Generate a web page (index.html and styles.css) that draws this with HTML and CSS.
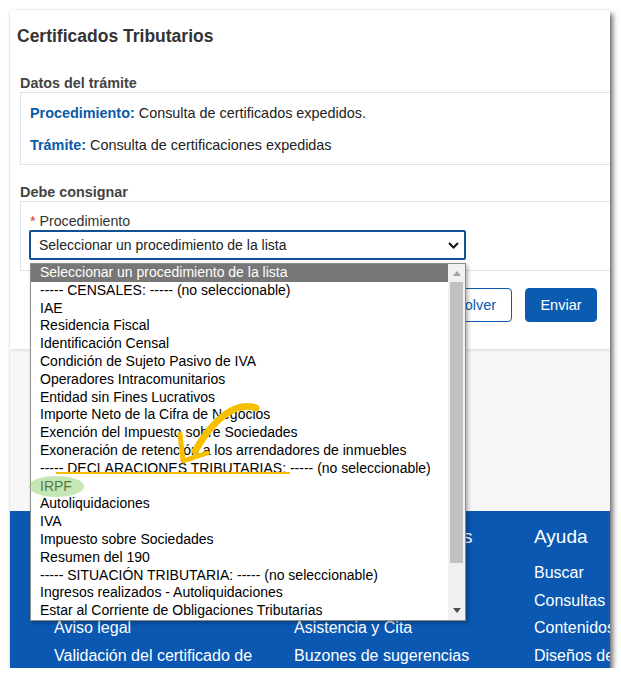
FILE: index.html
```html
<!DOCTYPE html>
<html lang="es">
<head>
<meta charset="utf-8">
<title>Certificados Tributarios</title>
<link rel="stylesheet" href="styles.css">
</head>
<body>
<div class="frame">
  <div class="page">
    <div class="card">
      <h1 class="title">Certificados Tributarios</h1>
      <div class="section">
        <h2 class="sec-title">Datos del trámite</h2>
        <div class="box box-data">
          <p class="line"><span class="lbl">Procedimiento:</span> Consulta de certificados expedidos.</p>
          <p class="line"><span class="lbl">Trámite:</span> Consulta de certificaciones expedidas</p>
        </div>
        <h2 class="sec-title sec-gap">Debe consignar</h2>
        <div class="box box-form">
          <div class="field-label"><span class="req">*</span> Procedimiento</div>
          <div class="select">
            <span>Seleccionar un procedimiento de la lista</span>
            <svg class="chev" width="11" height="7" viewBox="0 0 11 7"><path d="M1 1 L5.5 5.5 L10 1" fill="none" stroke="#111" stroke-width="2"/></svg>
          </div>
        </div>
        <div class="actions">
          <button class="btn btn-outline">Volver</button>
          <button class="btn btn-primary">Enviar</button>
        </div>
      </div>
    </div>
    <div class="gray"></div>
    <footer class="footer">
      <div class="fcol">
        <div class="fhead">Agencia Tributaria</div>
        <div class="flink">Accesibilidad</div>
        <div class="flink">Protección de datos</div>
        <div class="flink">Aviso legal</div>
        <div class="flink">Validación del certificado de</div>
      </div>
      <div class="fcol">
        <div class="fhead">Servicios y contactos</div>
        <div class="flink">Teléfonos</div>
        <div class="flink">Direcciones</div>
        <div class="flink">Asistencia y Cita</div>
        <div class="flink">Buzones de sugerencias</div>
      </div>
      <div class="fcol">
        <div class="fhead">Ayuda</div>
        <div class="flink">Buscar</div>
        <div class="flink">Consultas</div>
        <div class="flink">Contenidos</div>
        <div class="flink">Diseños de</div>
      </div>
    </footer>
  </div>

  <div class="dropdown">
    <ul class="options">
      <li class="opt sel">Seleccionar un procedimiento de la lista</li>
      <li class="opt">----- CENSALES: ----- (no seleccionable)</li>
      <li class="opt">IAE</li>
      <li class="opt">Residencia Fiscal</li>
      <li class="opt">Identificación Censal</li>
      <li class="opt">Condición de Sujeto Pasivo de IVA</li>
      <li class="opt">Operadores Intracomunitarios</li>
      <li class="opt">Entidad sin Fines Lucrativos</li>
      <li class="opt">Importe Neto de la Cifra de Negocios</li>
      <li class="opt">Exención del Impuesto sobre Sociedades</li>
      <li class="opt">Exoneración de retención a los arrendadores de inmuebles</li>
      <li class="opt">----- DECLARACIONES TRIBUTARIAS: ----- (no seleccionable)</li>
      <li class="opt">IRPF</li>
      <li class="opt">Autoliquidaciones</li>
      <li class="opt">IVA</li>
      <li class="opt">Impuesto sobre Sociedades</li>
      <li class="opt">Resumen del 190</li>
      <li class="opt">----- SITUACIÓN TRIBUTARIA: ----- (no seleccionable)</li>
      <li class="opt">Ingresos realizados - Autoliquidaciones</li>
      <li class="opt">Estar al Corriente de Obligaciones Tributarias</li>
    </ul>
    <div class="scrollbar">
      <svg class="arrow-up" width="8" height="5" viewBox="0 0 8 5"><path d="M0 5 L4 0 L8 5 Z" fill="#a3a3a3"/></svg>
      <div class="thumb"></div>
      <svg class="arrow-down" width="8" height="5" viewBox="0 0 8 5"><path d="M0 0 L4 5 L8 0 Z" fill="#505050"/></svg>
    </div>
  </div>

  <svg class="annot" width="600" height="658" viewBox="0 0 600 658">
    <ellipse cx="46.5" cy="476.5" rx="27.5" ry="10.5" fill="rgba(150,212,120,0.55)"/>
    <line x1="46" y1="463" x2="280" y2="463" stroke="#f6c000" stroke-width="2"/>
    <path d="M246 398 C 226 391, 204 408, 185 441" fill="none" stroke="#f6c000" stroke-width="7" stroke-linecap="round"/>
    <path d="M170 424 L173 451 L197 443" fill="none" stroke="#f6c000" stroke-width="5" stroke-linecap="round" stroke-linejoin="round"/>
  </svg>
</div>
</body>
</html>
```

FILE: styles.css
```css
html, body {
  margin: 0;
  padding: 0;
  background: #ffffff;
}

body {
  font-family: "Liberation Sans", Arial, sans-serif;
  color: #222;
}

.frame {
  position: relative;
  margin: 10px 0 0 10px;
  width: 600px;
  height: 658px;
  overflow: hidden;
  background: #f7f7f7;
  box-shadow: 0 0 2px rgba(0, 0, 0, 0.12), 3px 4px 5px rgba(0, 0, 0, 0.55);
}

.page {
  width: 700px;
  display: flex;
  flex-direction: column;
}

.card {
  background: #ffffff;
  padding: 16px 0 27px 7px;
  box-shadow: 0 1px 3px rgba(0, 0, 0, 0.12);
  position: relative;
}

.title {
  margin: 0;
  font-size: 17.5px;
  line-height: 20px;
  font-weight: bold;
  color: #333;
}

.section {
  padding-left: 3px;
  margin-top: 28px;
}

.sec-title {
  margin: 0;
  font-size: 14.4px;
  line-height: 18px;
  font-weight: bold;
  color: #444;
}

.sec-gap {
  margin-top: 18px;
}

.box {
  border: 1px solid #dbe3ec;
  border-right: none;
}

.box-data {
  padding: 11px 0 10px 9px;
  display: flex;
  flex-direction: column;
  gap: 14px;
}

.line {
  margin: 0;
  font-size: 14.4px;
  line-height: 18px;
  color: #222;
}

.lbl {
  color: #0b5aa6;
  font-weight: bold;
}

.box-form {
  padding: 10px 0 10px 8px;
}

.field-label {
  font-size: 14.2px;
  line-height: 18px;
  color: #333;
  padding-left: 1px;
}

.req {
  color: #d0332f;
}

.select {
  width: 437px;
  height: 30px;
  box-sizing: border-box;
  border: 2px solid #124f93;
  border-radius: 2px;
  display: flex;
  align-items: center;
  justify-content: space-between;
  padding: 0 5px 0 8px;
  font-size: 14px;
  color: #222;
  background: #fff;
}

.chev {
  display: block;
}

.actions {
  display: flex;
  justify-content: flex-end;
  gap: 13px;
  margin-top: 17px;
  padding-right: 113px;
}

.btn {
  width: 72px;
  height: 34px;
  border-radius: 4px;
  font-family: "Liberation Sans", Arial, sans-serif;
  font-size: 14.5px;
  padding: 0;
}

.btn-outline {
  background: #fff;
  border: 1px solid #0b5cb0;
  color: #0b5cb0;
}

.btn-primary {
  background: #0b5cb0;
  border: 1px solid #0b5cb0;
  color: #fff;
}

.gray {
  height: 162px;
  background: #f7f7f7;
}

.footer {
  background: #0a58b2;
  display: flex;
  padding: 15px 0 0 44px;
  height: 200px;
  color: #fff;
}

.fcol {
  width: 240px;
  flex: none;
  display: flex;
  flex-direction: column;
}

.fhead {
  font-size: 19px;
  line-height: 22px;
  margin-bottom: 11px;
  white-space: nowrap;
}

.flink {
  font-size: 16px;
  line-height: 27.5px;
  white-space: nowrap;
}

.dropdown {
  position: absolute;
  left: 20px;
  top: 253px;
  width: 436px;
  height: 358px;
  box-sizing: border-box;
  border: 1px solid #8c8c8c;
  background: #fff;
  box-shadow: 2px 2px 4px rgba(0, 0, 0, 0.3);
  display: flex;
}

.options {
  list-style: none;
  margin: 0;
  padding: 0;
  flex: 1;
}

.opt {
  height: 17.8px;
  line-height: 17.8px;
  font-size: 14px;
  padding-left: 9px;
  color: #000;
  white-space: nowrap;
}

.opt.sel {
  background: #777777;
  color: #fff;
}

.scrollbar {
  width: 17px;
  background: #f1f1f1;
  position: relative;
  display: flex;
  flex-direction: column;
  align-items: center;
}

.arrow-up {
  margin-top: 7px;
}

.thumb {
  width: 13px;
  height: 281px;
  background: #c1c1c1;
  margin-top: 6px;
}

.arrow-down {
  margin-top: auto;
  margin-bottom: 7px;
}

.annot {
  position: absolute;
  left: 0;
  top: 0;
  pointer-events: none;
}
```
